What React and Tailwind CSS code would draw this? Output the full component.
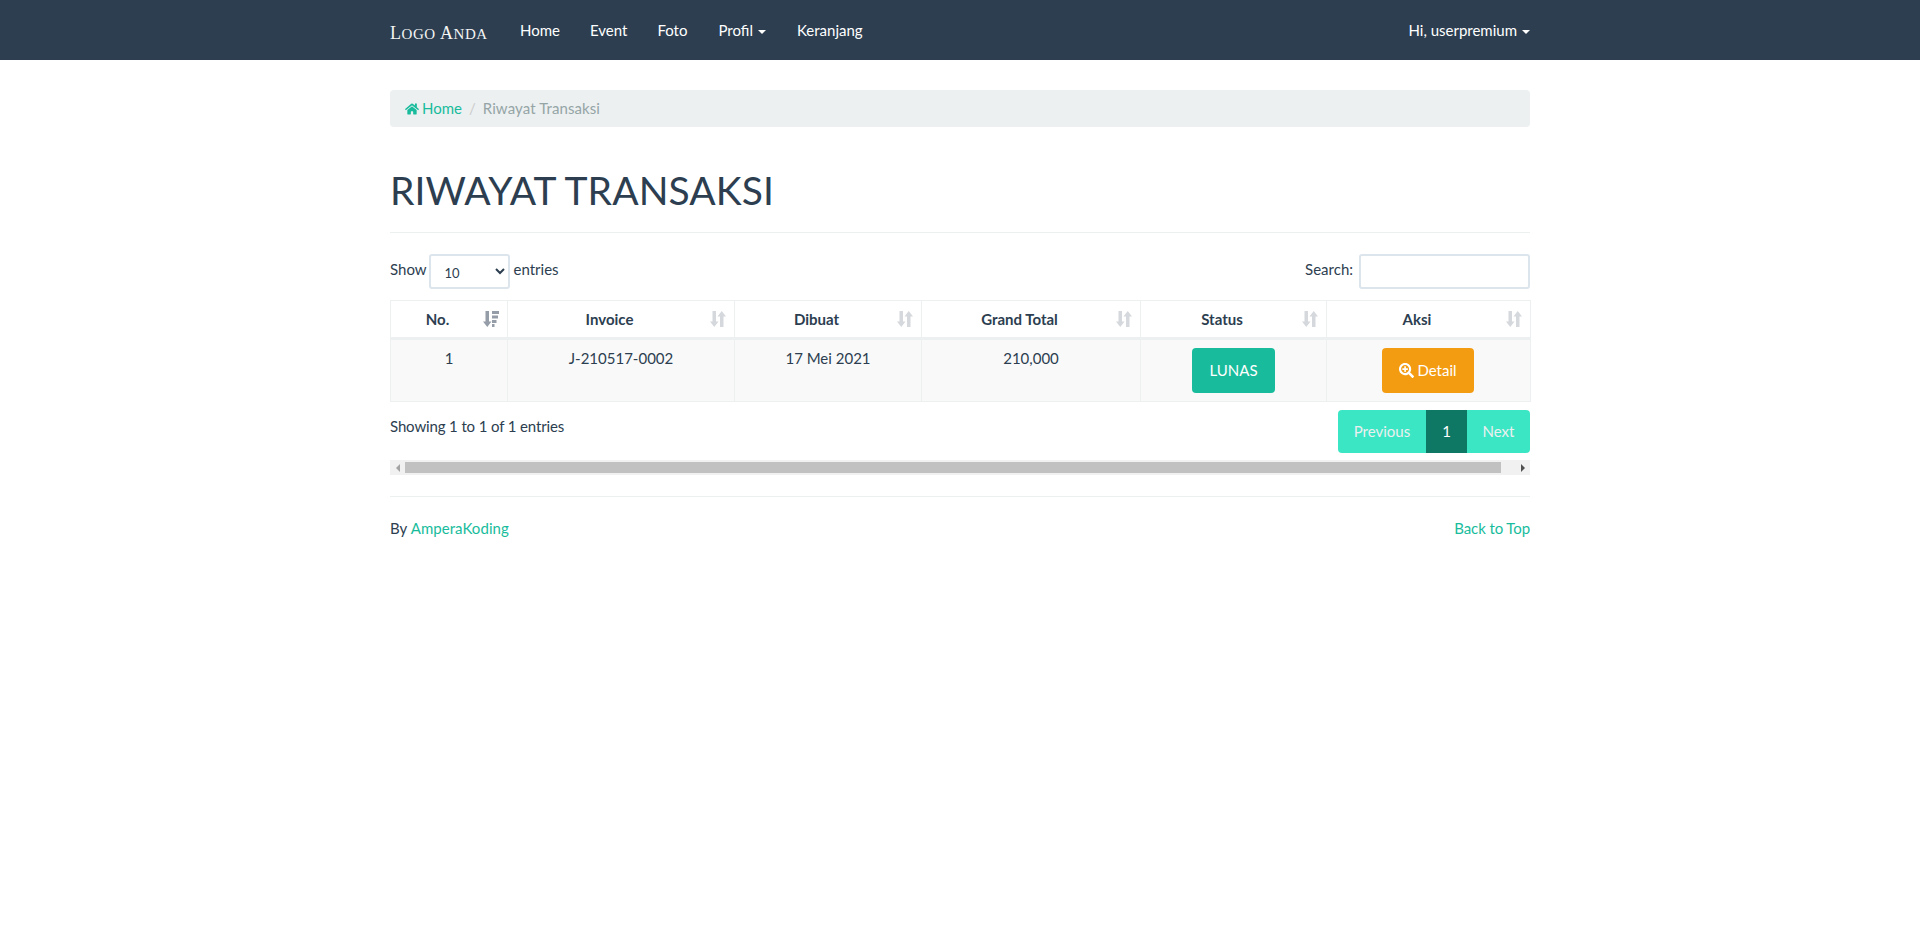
import React from "react";
import { FaHome, FaSearchPlus } from "react-icons/fa";

const SortIcon = ({ active }) => (
  <svg
    viewBox="0 0 16 16"
    className={`absolute right-[8px] top-[10px] w-4 h-4 ${active ? "text-[#959ea8]" : "text-[#d5d8dc]"}`}
    fill="currentColor"
  >
    <path d="M2.500 0h3.500v10.500h2.500L4.250 16 0 10.500h2.500z" />
    {active ? (
      <path d="M9 0h7v3H9zM9 4.500h6v3H9zM9 9h4.500v3H9zM9 13h2.500v3H9z" />
    ) : (
      <path d="M10 16h3.500V5.500H16L11.750 0 7.500 5.500H10z" />
    )}
  </svg>
);

const Caret = () => (
  <span className="inline-block ml-[5px] align-middle w-0 h-0 border-x-[4px] border-x-transparent border-t-[4px] border-t-white" />
);

const columns = [
  { label: "No.", width: "w-[117px]", active: true },
  { label: "Invoice", width: "w-[227px]" },
  { label: "Dibuat", width: "w-[187px]" },
  { label: "Grand Total", width: "w-[219px]" },
  { label: "Status", width: "w-[186px]" },
  { label: "Aksi", width: "w-[204px]" },
];

const cell = "border border-[#ecf0f1] px-2 pt-2 pb-2 align-top text-center";

export default function App() {
  return (
    <div className="min-h-[936px] bg-white text-[15px] leading-[21px] text-[#2c3e50] font-['Lato','Open_Sans',sans-serif]">
      {/* navbar */}
      <nav className="h-[60px] bg-[#2c3e50] text-white">
        <div className="w-[1140px] mx-auto h-full flex items-center justify-between">
          <div className="flex items-center">
            <span className="w-[115px] pt-[8px] font-['Liberation_Serif',serif] text-[15px] tracking-[0.55px] text-[#f4f4f4] whitespace-nowrap">
              <span className="text-[18px]">L</span>OGO <span className="text-[18px]">A</span>NDA
            </span>
            <a className="px-[15px]">Home</a>
            <a className="px-[15px]">Event</a>
            <a className="pl-[15px] pr-[16px]">Foto</a>
            <a className="pl-[15px] pr-[16px]">Profil<Caret /></a>
            <a className="px-[15px]">Keranjang</a>
          </div>
          <a>Hi, userpremium<Caret /></a>
        </div>
      </nav>

      <main className="w-[1140px] mx-auto pt-[30px]">
        {/* breadcrumb */}
        <div className="h-[37px] bg-[#ecf0f1] rounded px-[15px] flex items-center">
          <FaHome className="text-[#18bc9c] w-[14px] h-[14px] mr-[3px]" />
          <a className="text-[#18bc9c]">Home</a>
          <span className="text-[#cccccc] px-[7px]">/</span>
          <span className="text-[#95a5a6] tracking-[0.1px]">Riwayat Transaksi</span>
        </div>

        <h1 className="mt-[42px] pb-[20px] mb-[21px] border-b border-[#ecf0f1] text-[39px] tracking-[0.1px] leading-[43px] font-normal">
          RIWAYAT TRANSAKSI
        </h1>

        {/* table controls */}
        <div className="flex items-center justify-between h-[34px]">
          <label className="flex items-center">
            <span className="pb-[3px]">Show</span>
            <select className="w-[81px] h-[35px] ml-[2px] mr-[4px] pl-[10px] pr-[6px] pt-[4px] text-[13px] bg-white border-2 border-[#dce4ec] rounded-[3px] outline-none">
              <option>10</option>
              <option>25</option>
              <option>50</option>
            </select>
            <span className="pb-[3px]">entries</span>
          </label>
          <label className="flex items-center">
            <span className="pb-[3px]">Search:</span>
            <input className="w-[171px] h-[35px] ml-[6px] bg-white border-2 border-[#dce4ec] rounded-[3px] outline-none" />
          </label>
        </div>

        <table className="w-full mt-[12px] table-fixed border-collapse">
          <thead>
            <tr>
              {columns.map((c) => (
                <th
                  key={c.label}
                  className={`${c.width} relative h-[38px] border border-b-[3px] border-[#ecf0f1] pr-[31px] pl-2 font-bold text-center`}
                >
                  {c.label}
                  <SortIcon active={c.active} />
                </th>
              ))}
            </tr>
          </thead>
          <tbody>
            <tr className="bg-[#f9f9f9] h-[61px]">
              <td className={cell}>1</td>
              <td className={cell}>J-210517-0002</td>
              <td className={cell}>17 Mei 2021</td>
              <td className={cell}>210,000</td>
              <td className={cell}>
                <a className="inline-block h-[45px] px-[17px] py-[12px] rounded bg-[#18bc9c] text-white">LUNAS</a>
              </td>
              <td className={cell}>
                <a className="inline-flex items-center justify-center w-[92px] h-[45px] mr-[1px] rounded bg-[#f39c12] text-white">
                  <FaSearchPlus className="w-[15px] h-[15px] mr-[3px]" />
                  Detail
                </a>
              </td>
            </tr>
          </tbody>
        </table>

        {/* info and pagination */}
        <div className="flex justify-between mt-[8px]">
          <div className="pt-[6px] tracking-[-0.13px]">Showing 1 to 1 of 1 entries</div>
          <div className="flex h-[43px] leading-[43px] text-center rounded overflow-hidden">
            <a className="w-[88px] bg-[#3be6c4] text-[#ecf0f1]">Previous</a>
            <a className="w-[41px] bg-[#0f7864] text-white">1</a>
            <a className="w-[63px] bg-[#3be6c4] text-[#ecf0f1]">Next</a>
          </div>
        </div>

        {/* horizontal scrollbar */}
        <div className="mt-[7px] h-[15px] bg-[#f1f1f1] flex items-center justify-between">
          <span className="w-[15px] flex justify-center">
            <span className="w-0 h-0 border-y-[4px] border-y-transparent border-r-[4px] border-r-[#a3a3a3]" />
          </span>
          <span className="flex-1 h-[11px] mr-[14px] bg-[#c1c1c1]" />
          <span className="w-[15px] flex justify-center">
            <span className="w-0 h-0 border-y-[4px] border-y-transparent border-l-[4px] border-l-[#505050]" />
          </span>
        </div>

        {/* footer */}
        <footer className="mt-[21px] pt-[21px] border-t border-[#ecf0f1] flex justify-between">
          <span>
            By <a className="text-[#18bc9c] tracking-[0.05px]">AmperaKoding</a>
          </span>
          <a className="text-[#18bc9c] tracking-[-0.1px]">Back to Top</a>
        </footer>
      </main>
    </div>
  );
}
